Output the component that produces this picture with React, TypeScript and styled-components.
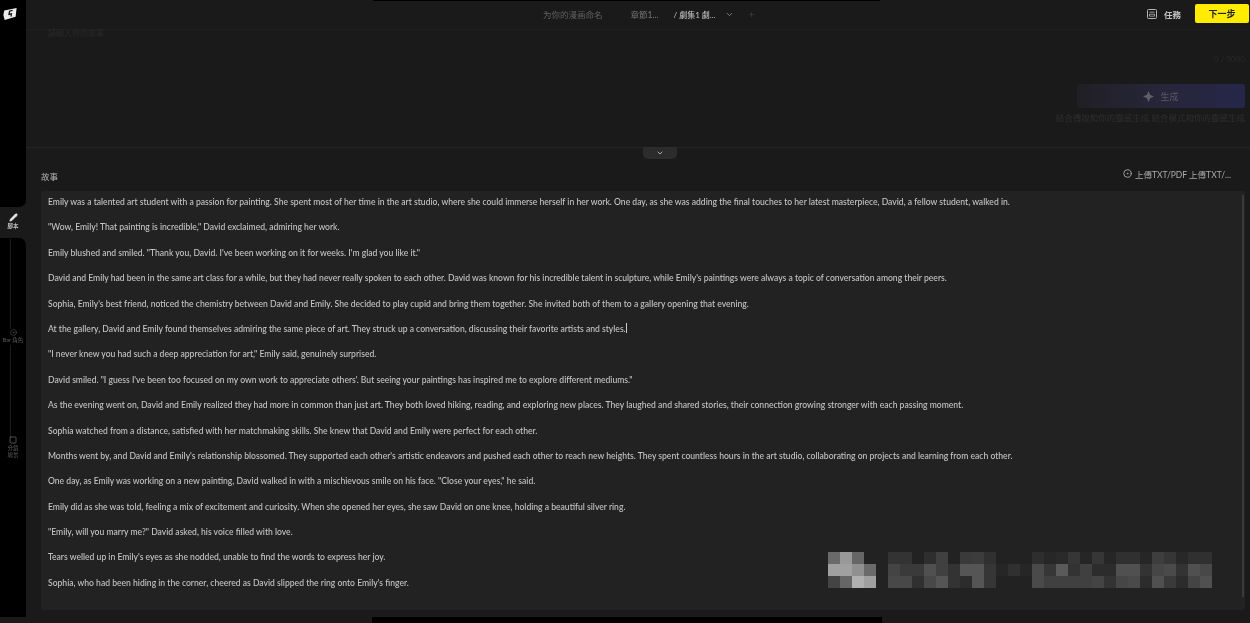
import React from "react";
import styled, { createGlobalStyle } from "styled-components";
import { ChevronDown, Plus, Pencil, CircleDot, Disc, Square } from "lucide-react";

const STORY = [
  "Emily was a talented art student with a passion for painting. She spent most of her time in the art studio, where she could immerse herself in her work. One day, as she was adding the final touches to her latest masterpiece, David, a fellow student, walked in.",
  "\"Wow, Emily! That painting is incredible,\" David exclaimed, admiring her work.",
  "Emily blushed and smiled. \"Thank you, David. I've been working on it for weeks. I'm glad you like it.\"",
  "David and Emily had been in the same art class for a while, but they had never really spoken to each other. David was known for his incredible talent in sculpture, while Emily's paintings were always a topic of conversation among their peers.",
  "Sophia, Emily's best friend, noticed the chemistry between David and Emily. She decided to play cupid and bring them together. She invited both of them to a gallery opening that evening.",
  "At the gallery, David and Emily found themselves admiring the same piece of art. They struck up a conversation, discussing their favorite artists and styles.",
  "\"I never knew you had such a deep appreciation for art,\" Emily said, genuinely surprised.",
  "David smiled. \"I guess I've been too focused on my own work to appreciate others'. But seeing your paintings has inspired me to explore different mediums.\"",
  "As the evening went on, David and Emily realized they had more in common than just art. They both loved hiking, reading, and exploring new places. They laughed and shared stories, their connection growing stronger with each passing moment.",
  "Sophia watched from a distance, satisfied with her matchmaking skills. She knew that David and Emily were perfect for each other.",
  "Months went by, and David and Emily's relationship blossomed. They supported each other's artistic endeavors and pushed each other to reach new heights. They spent countless hours in the art studio, collaborating on projects and learning from each other.",
  "One day, as Emily was working on a new painting, David walked in with a mischievous smile on his face. \"Close your eyes,\" he said.",
  "Emily did as she was told, feeling a mix of excitement and curiosity. When she opened her eyes, she saw David on one knee, holding a beautiful silver ring.",
  "\"Emily, will you marry me?\" David asked, his voice filled with love.",
  "Tears welled up in Emily's eyes as she nodded, unable to find the words to express her joy.",
  "Sophia, who had been hiding in the corner, cheered as David slipped the ring onto Emily's finger.",
];

// grey level of each mosaic cell, 0 = no cell
const MOSAIC = [
  0x6a, 0x99, 0x66, 0x22, 0, 0x33, 0x33, 0x22, 0x2e, 0x40, 0, 0x3a, 0x3c, 0x30, 0, 0, 0, 0x2e, 0x27, 0x2a, 0x36, 0x26, 0x36, 0x26, 0x30, 0x30, 0x26, 0x3e, 0x36, 0x28, 0x30, 0x30,
  0xa0, 0xa0, 0x90, 0x6a, 0, 0x44, 0x3a, 0x3a, 0x50, 0x40, 0x33, 0x55, 0x55, 0x36, 0x26, 0x30, 0x26, 0x4a, 0x36, 0x5a, 0x33, 0x40, 0x2c, 0x2c, 0x50, 0x50, 0x33, 0x46, 0x4a, 0x33, 0x50, 0x48,
  0x44, 0x66, 0xb0, 0xa0, 0, 0x48, 0x48, 0x30, 0x48, 0x55, 0x33, 0x2c, 0x55, 0x36, 0, 0, 0, 0x4a, 0x40, 0x40, 0x40, 0x40, 0x44, 0x33, 0x46, 0x4a, 0x2c, 0x50, 0x3a, 0x2c, 0x44, 0x50,
];

const TaskIcon = () => (
  <svg width="10" height="10" viewBox="0 0 10 10" fill="none" stroke="#b4b4b4">
    <rect x="0.5" y="0.5" width="9" height="9" rx="1" />
    <path d="M2.5 3.2h5M2.5 5.2h5v2h-5z" strokeWidth="0.8" />
  </svg>
);

const SparkIcon = () => (
  <svg width="11" height="11" viewBox="0 0 11 11" fill="#5e5e64">
    <path d="M5.5 0 7.2 3.8 11 5.5 7.2 7.2 5.5 11 3.8 7.2 0 5.5 3.8 3.8Z" />
  </svg>
);

const App = () => {
  return (
    <Page>
      <GlobalStyle />
      <TopNotch />
      <BottomNotch />
      <Sidebar>
        <TopRail>
          <Logo viewBox="0 0 14 12">
            <path d="M1.2 2.6 13.6 0 12.6 8.8 1.6 12 .4 7Z" fill="#ececec" />
            <path d="M9.6 2.4 6.6 3.2 6 6.4 8.4 5.8 8 8.6" fill="none" stroke="#111" strokeWidth="1.3" />
          </Logo>
        </TopRail>
        <ActiveTab>
          <Pencil size={9} fill="#e8e8e8" strokeWidth={1.5} />
          <TabLabel>腳本</TabLabel>
        </ActiveTab>
        <BottomRail>
          <RailLine $height={90} />
          <Disc size={7} color="#555" />
          <RailLabel>Bar 角色</RailLabel>
          <RailLine $height={91} />
          <Square size={8} color="#777" />
          <RailLabel>分鏡<br />場景</RailLabel>
        </BottomRail>
      </Sidebar>
      <Main>
        <Header>
          <ComicName>为你的漫画命名</ComicName>
          <Crumb>章節1...</Crumb>
          <Crumb $active>/ 劇集1 劇...</Crumb>
          <ChevronDown size={9} color="#999" />
          <AddEpisode>
            <Plus size={7} color="#444" />
          </AddEpisode>
          <HeaderRight>
            <TaskLink>
              <TaskIcon />
              任務
            </TaskLink>
            <NextButton>下一步</NextButton>
          </HeaderRight>
        </Header>
        <GeneratePanel>
          <DimTitle>請輸入你的故事</DimTitle>
          <Counter>0 / 5000</Counter>
          <GenerateButton>
            <SparkIcon />
            生成
          </GenerateButton>
          <Hint>結合傳說和你的靈感生成 結合模式和你的靈感生成</Hint>
          <CollapseTab>
            <ChevronDown size={8} color="#aaa" strokeWidth={3} />
          </CollapseTab>
        </GeneratePanel>
        <StorySection>
          <StoryHead>
            <StoryTitle>故事</StoryTitle>
            <UploadLink>
              <CircleDot size={9} strokeWidth={2.4} />
              上傳TXT/PDF 上傳TXT/...
            </UploadLink>
          </StoryHead>
          <StoryBox>
            {STORY.map((line, index) => (
              <StoryLine key={index}>
                {line}
                {index === 5 && <Caret />}
              </StoryLine>
            ))}
            <Scrollbar />
            <Mosaic>
              {MOSAIC.map((level, index) => (
                <MosaicCell key={index} $level={level} />
              ))}
            </Mosaic>
          </StoryBox>
        </StorySection>
      </Main>
    </Page>
  );
};

export default App;

const GlobalStyle = createGlobalStyle`
  html, body {
    margin: 0;
    background: #1a1a1a;
    overflow: hidden;
  }
  * {
    box-sizing: border-box;
  }
`;

const Page = styled.div`
  position: relative;
  display: flex;
  width: 1250px;
  height: 623px;
  overflow: hidden;
  background: #1a1a1a;
  color: #ccc;
  font-family: Lato, "Noto Sans CJK TC", sans-serif;
  filter: blur(0.45px);
`;

const TopNotch = styled.div`
  position: absolute;
  top: 0;
  left: 373px;
  width: 507px;
  height: 1px;
  background: #000;
`;

const BottomNotch = styled.div`
  position: absolute;
  bottom: 0;
  left: 372px;
  width: 510px;
  height: 6px;
  background: #000;
`;

const Sidebar = styled.aside`
  display: flex;
  flex-direction: column;
  flex: 0 0 26px;
  padding-bottom: 6px;
`;

const TopRail = styled.div`
  height: 207px;
  padding: 8px 0 0 3px;
  background: #000;
  border-bottom-right-radius: 7px;
`;

const Logo = styled.svg`
  display: block;
  width: 14px;
  height: 12px;
`;

const ActiveTab = styled.div`
  display: flex;
  flex-direction: column;
  align-items: center;
  height: 31px;
  padding-top: 6px;
  color: #e8e8e8;
`;

const TabLabel = styled.span`
  font-size: 5.5px;
  line-height: 7px;
  margin-top: 1px;
`;

const BottomRail = styled.div`
  display: flex;
  flex: 1;
  flex-direction: column;
  align-items: center;
  padding-top: 1px;
  background: #000;
  border-top-right-radius: 7px;
`;

const RailLine = styled.div<{ $height: number }>`
  flex: 0 0 ${({ $height }) => $height}px;
  width: 1px;
  margin-right: 6px;
  background: #1c1c1c;
`;

const RailLabel = styled.span`
  font-size: 5.5px;
  line-height: 7px;
  text-align: center;
  color: #5c5c5c;
  margin-top: 1px;
  margin-bottom: 1px;
`;

const Main = styled.main`
  display: flex;
  flex: 1;
  flex-direction: column;
  min-width: 0;
`;

const Header = styled.header`
  display: flex;
  align-items: center;
  flex: 0 0 30px;
  padding: 0 1px 1px 517px;
  border-bottom: 1px solid #202020;
`;

const ComicName = styled.span`
  margin-right: 28px;
  font-size: 8.5px;
  color: #606060;
`;

const Crumb = styled.span<{ $active?: boolean }>`
  margin-right: ${({ $active }) => ($active ? "10px" : "15px")};
  font-size: ${({ $active }) => ($active ? "8px" : "8.5px")};
  font-weight: ${({ $active }) => ($active ? 500 : 400)};
  color: ${({ $active }) => ($active ? "#bbb" : "#777")};
  white-space: nowrap;
`;

const AddEpisode = styled.span`
  display: flex;
  margin-left: 14px;
`;

const HeaderRight = styled.div`
  display: flex;
  align-items: center;
  gap: 14px;
  margin-left: auto;
  margin-top: -1px;
`;

const TaskLink = styled.span`
  display: flex;
  align-items: center;
  gap: 7px;
  font-size: 8.5px;
  font-weight: 700;
  color: #c4c4c4;
`;

const NextButton = styled.button`
  width: 54px;
  height: 19px;
  padding: 0;
  border: 0;
  border-radius: 2px;
  background: #ffec00;
  color: #222;
  font-family: inherit;
  font-size: 9px;
  font-weight: 700;
`;

const GeneratePanel = styled.section`
  position: relative;
  display: flex;
  flex-direction: column;
  flex: 0 0 118px;
  padding: 0 5px 0 22px;
  border-bottom: 1px solid #242424;
`;

const DimTitle = styled.div`
  height: 12px;
  margin-top: -3px;
  font-size: 8px;
  line-height: 12px;
  color: #2a2a2a;
`;

const Counter = styled.div`
  align-self: flex-end;
  margin-top: 14px;
  font-size: 8px;
  line-height: 12px;
  color: #292929;
`;

const GenerateButton = styled.div`
  display: flex;
  align-items: center;
  justify-content: center;
  gap: 6px;
  align-self: flex-end;
  width: 168px;
  height: 24px;
  margin-top: 19px;
  border-radius: 3px;
  background: linear-gradient(90deg, #211f24, #27263a 50%, #26264a);
  font-size: 9px;
  color: #5a5a60;
`;

const Hint = styled.div`
  align-self: flex-end;
  margin-top: 4px;
  font-size: 8.5px;
  line-height: 12px;
  color: #2f2f2f;
  white-space: nowrap;
`;

const CollapseTab = styled.div`
  position: absolute;
  left: 617px;
  bottom: -12px;
  display: flex;
  align-items: center;
  justify-content: center;
  width: 34px;
  height: 12px;
  background: #2c2c2c;
  border-radius: 0 0 5px 5px;
`;

const StorySection = styled.section`
  display: flex;
  flex: 1;
  flex-direction: column;
  min-height: 0;
  padding: 20px 5px 13px 15px;
`;

const StoryHead = styled.div`
  display: flex;
  align-items: center;
  justify-content: space-between;
  height: 17px;
  padding-right: 14px;
  margin-bottom: 6px;
`;

const StoryTitle = styled.span`
  margin-top: -1px;
  font-size: 8.5px;
  color: #b0b0b0;
`;

const UploadLink = styled.span`
  display: flex;
  align-items: center;
  gap: 3px;
  margin-top: -6px;
  font-size: 8.5px;
  color: #aaa;
`;

const StoryBox = styled.div`
  position: relative;
  flex: 1;
  min-height: 0;
  padding: 0 7px;
  overflow: hidden;
  background: #222;
  border-radius: 2px;
`;

const StoryLine = styled.p`
  margin: 0;
  height: 25.4px;
  font-size: 8.58px;
  line-height: 23px;
  font-weight: 500;
  color: #c6c6c6;
  white-space: nowrap;
`;

const Caret = styled.span`
  display: inline-block;
  width: 1px;
  height: 10px;
  vertical-align: -1px;
  background: #ccc;
`;

const Scrollbar = styled.div`
  position: absolute;
  top: 4px;
  right: 1px;
  width: 2px;
  height: 402px;
  background: #3a3a3a;
`;

const Mosaic = styled.div`
  position: absolute;
  top: 361px;
  left: 787px;
  display: grid;
  grid-template-columns: repeat(32, 12px);
  grid-auto-rows: 12px;
`;

const MosaicCell = styled.div<{ $level: number }>`
  background: ${({ $level }) =>
    $level ? `rgb(${$level}, ${$level}, ${$level})` : "transparent"};
`;
